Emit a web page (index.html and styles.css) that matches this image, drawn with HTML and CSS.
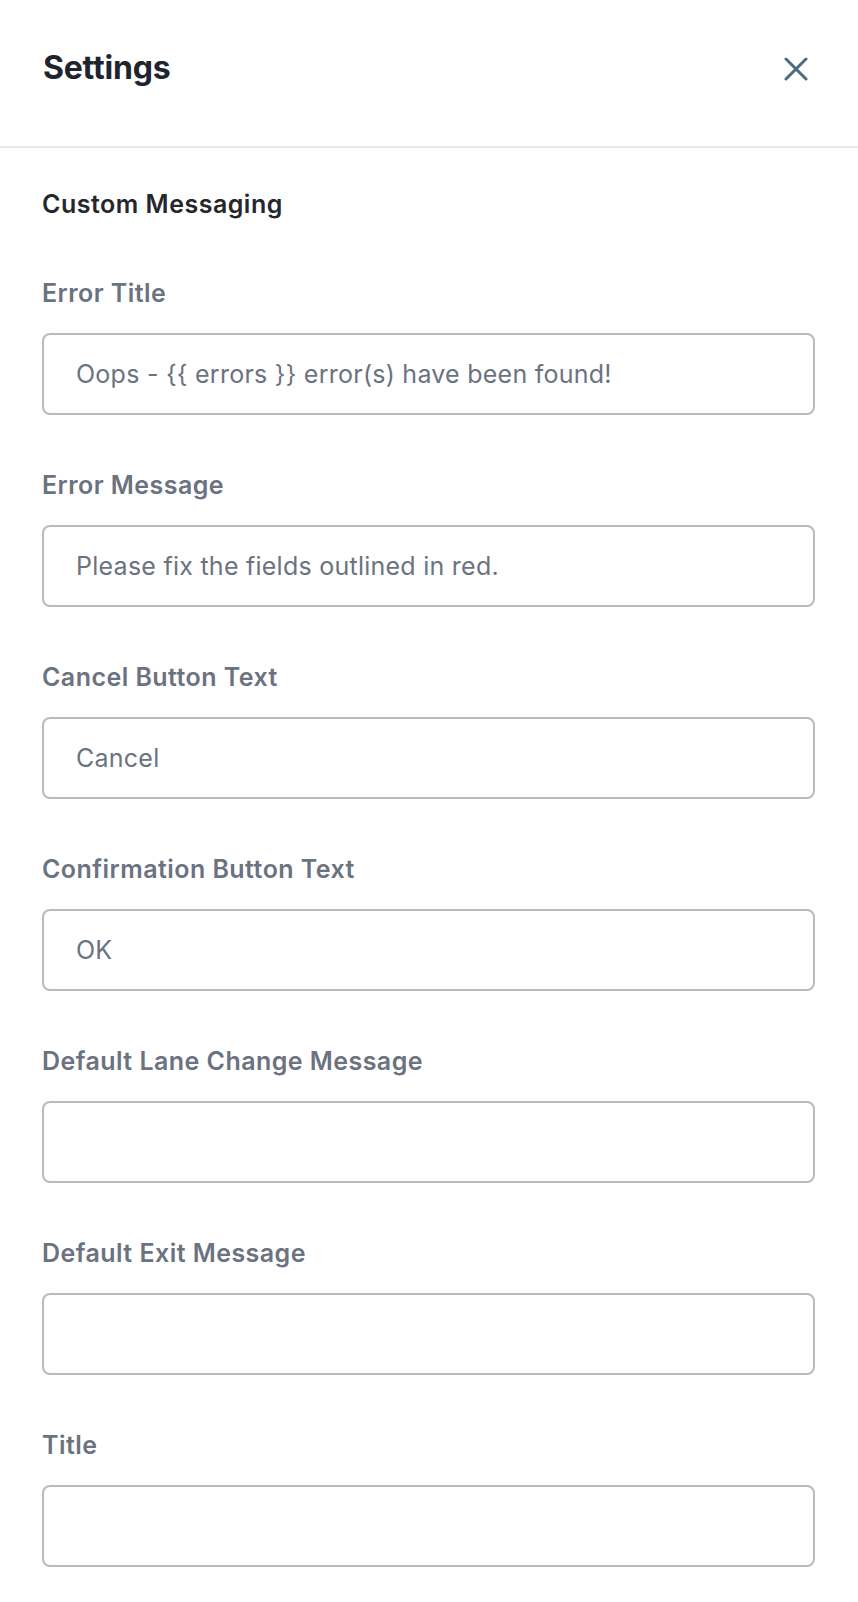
FILE: index.html
```html
<!DOCTYPE html>
<html lang="en">
<head>
<meta charset="utf-8">
<title>Settings</title>
<link rel="stylesheet" href="styles.css">
</head>
<body>
<div class="panel">
  <header class="header">
    <h1 class="title">Settings</h1>
    <button class="close" aria-label="Close">
      <svg width="24" height="24" viewBox="0 0 24 24" fill="none" stroke="currentColor" stroke-width="3" stroke-linecap="round">
        <path d="M2 2 L22 22 M22 2 L2 22"/>
      </svg>
    </button>
  </header>
  <main class="content">
    <h2 class="section">Custom Messaging</h2>
    <div class="field">
      <label class="label">Error Title</label>
      <div class="input">Oops - {{ errors }} error(s) have been found!</div>
    </div>
    <div class="field">
      <label class="label">Error Message</label>
      <div class="input">Please fix the fields outlined in red.</div>
    </div>
    <div class="field">
      <label class="label">Cancel Button Text</label>
      <div class="input">Cancel</div>
    </div>
    <div class="field">
      <label class="label">Confirmation Button Text</label>
      <div class="input">OK</div>
    </div>
    <div class="field">
      <label class="label">Default Lane Change Message</label>
      <div class="input"></div>
    </div>
    <div class="field">
      <label class="label">Default Exit Message</label>
      <div class="input"></div>
    </div>
    <div class="field">
      <label class="label">Title</label>
      <div class="input"></div>
    </div>
  </main>
</div>
</body>
</html>
```

FILE: styles.css
```css
* { box-sizing: border-box; }
html, body {
  margin: 0;
  padding: 0;
  background: #ffffff;
  font-family: Inter, "Noto Sans", "Liberation Sans", sans-serif;
}
.panel {
  width: 858px;
  min-height: 1602px;
  background: #ffffff;
}
.header {
  height: 148px;
  border-bottom: 2px solid #e8e9eb;
  display: flex;
  align-items: flex-start;
  justify-content: space-between;
  padding: 48px 50px 0 43px;
}
.title {
  margin: 0;
  font-size: 32px;
  line-height: 40px;
  font-weight: 700;
  color: #1f2530;
  letter-spacing: -0.2px;
}
.close {
  margin-top: 9px;
  padding: 0;
  border: 0;
  background: none;
  color: #4a6a80;
  width: 24px;
  height: 24px;
  display: flex;
}
.content {
  padding: 40px 43px 0 42px;
  display: flex;
  flex-direction: column;
}
.section {
  margin: 0 0 57px 0;
  font-size: 25px;
  line-height: 32px;
  font-weight: 600;
  color: #25272c;
  letter-spacing: 0.5px;
}
.field {
  display: flex;
  flex-direction: column;
  margin-bottom: 54px;
}
.label {
  font-size: 25px;
  line-height: 32px;
  font-weight: 600;
  color: #6b7280;
  margin-bottom: 24px;
  letter-spacing: 0.45px;
}
.input {
  height: 82px;
  border: 2px solid #b6bac1;
  border-radius: 8px;
  padding: 0 32px;
  display: flex;
  align-items: center;
  font-size: 25px;
  letter-spacing: 0.25px;
  color: #6b7280;
  background: #ffffff;
}
```
